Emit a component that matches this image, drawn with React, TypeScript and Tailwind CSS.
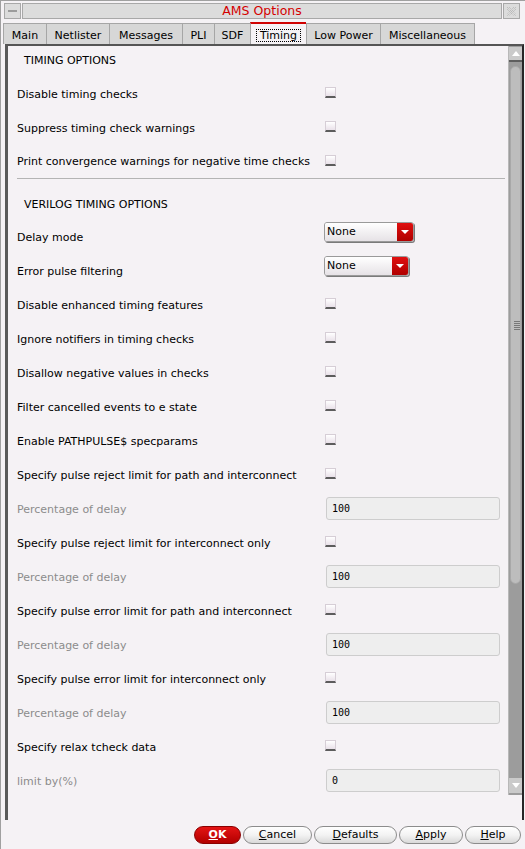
import type { ReactNode } from 'react'

type Row =
  | { kind: 'check'; label: string }
  | { kind: 'select'; label: string; width: number }
  | { kind: 'input'; label: string; value: string }

const ROWS: Row[] = [
  { kind: 'select', label: 'Delay mode', width: 90 },
  { kind: 'select', label: 'Error pulse filtering', width: 85 },
  { kind: 'check', label: 'Disable enhanced timing features' },
  { kind: 'check', label: 'Ignore notifiers in timing checks' },
  { kind: 'check', label: 'Disallow negative values in checks' },
  { kind: 'check', label: 'Filter cancelled events to e state' },
  { kind: 'check', label: 'Enable PATHPULSE$ specparams' },
  { kind: 'check', label: 'Specify pulse reject limit for path and interconnect' },
  { kind: 'input', label: 'Percentage of delay', value: '100' },
  { kind: 'check', label: 'Specify pulse reject limit for interconnect only' },
  { kind: 'input', label: 'Percentage of delay', value: '100' },
  { kind: 'check', label: 'Specify pulse error limit for path and interconnect' },
  { kind: 'input', label: 'Percentage of delay', value: '100' },
  { kind: 'check', label: 'Specify pulse error limit for interconnect only' },
  { kind: 'input', label: 'Percentage of delay', value: '100' },
  { kind: 'check', label: 'Specify relax tcheck data' },
  { kind: 'input', label: 'limit by(%)', value: '0' },
]

const TABS = [
  { name: 'Main', w: 43 },
  { name: 'Netlister', w: 63 },
  { name: 'Messages', w: 73 },
  { name: 'PLI', w: 32 },
  { name: 'SDF', w: 36 },
  { name: 'Timing', w: 56, active: true },
  { name: 'Low Power', w: 74 },
  { name: 'Miscellaneous', w: 95 },
]

function Checkbox() {
  return (
    <span className="block mt-[10px] w-[11px] h-[11px] bg-linear-to-b from-white to-[#e9e1e9] border border-[#d6ced6] border-b-2 border-b-[#5c5c5c]" />
  )
}

function Select({ width }: { width: number }) {
  return (
    <div
      className="mt-[2px] -ml-[1px] h-[20px] flex rounded-[3px] border border-[#9a9a9a] shadow-[1px_1px_0_#7a7a7a] overflow-hidden"
      style={{ width }}
    >
      <div className="flex-1 flex items-center pl-[2px] bg-linear-to-b from-white to-[#e6e2e6]">None</div>
      <div className="w-[16px] flex items-center justify-center bg-linear-to-b from-[#e01010] to-[#b00000]">
        <span className="block w-0 h-0 border-x-[4px] border-x-transparent border-t-[4px] border-t-white" />
      </div>
    </div>
  )
}

function TextField({ value }: { value: string }) {
  return (
    <div className="mt-[5px] ml-[1px] w-[174px] h-[23px] flex items-center pl-[5px] rounded-[3px] border border-[#cdcdcd] bg-[#eeeeee] font-['DejaVu_Sans_Mono',monospace] text-[10px]">
      {value}
    </div>
  )
}

function OptionRow({ row }: { row: Row }) {
  const muted = row.kind === 'input'
  return (
    <div className="h-[34px] shrink-0 flex pl-[9px]">
      <div className={`w-[308px] flex items-center pt-[1px] ${muted ? 'text-[#8c8c8c]' : ''}`}>{row.label}</div>
      {row.kind === 'check' && <Checkbox />}
      {row.kind === 'select' && <Select width={row.width} />}
      {row.kind === 'input' && <TextField value={row.value} />}
    </div>
  )
}

function Btn({ children, primary, w }: { children: ReactNode; primary?: boolean; w: number }) {
  return (
    <button
      className={`h-[18px] rounded-[9px] border flex items-center justify-center text-[11px] ${
        primary
          ? 'bg-linear-to-b from-[#e41414] to-[#b20000] border-[#8a0000] text-white font-bold'
          : 'bg-linear-to-b from-white via-[#f3f3f3] to-[#d9d9d9] border-[#8c8c8c] text-black'
      }`}
      style={{ width: w }}
    >
      {children}
    </button>
  )
}

function Scrollbar() {
  return (
    <div className="w-[14px] flex flex-col pt-[1px] pb-[2px] bg-[#9c9c9c] border-l border-[#b8b8b8]">
      <div className="h-[15px] shrink-0 flex items-center justify-center bg-[#cacaca] border-b-2 border-[#5e5e5e]">
        <span className="block w-0 h-0 border-x-[4px] border-x-transparent border-b-[5px] border-b-white" />
      </div>
      <div className="mt-[4px] h-[518px] shrink-0 mx-[1px] rounded-[6px] bg-[#bdbdbd] border border-[#a8a8a8] flex items-center justify-center">
        <div className="flex flex-col gap-[1px] ml-[2px]">
          <span className="block w-[6px] h-px bg-[#777]" />
          <span className="block w-[6px] h-px bg-[#777]" />
          <span className="block w-[6px] h-px bg-[#777]" />
          <span className="block w-[6px] h-px bg-[#777]" />
          <span className="block w-[6px] h-px bg-[#777]" />
        </div>
      </div>
      <div className="flex-1" />
      <div className="h-[15px] shrink-0 flex items-center justify-center bg-[#cacaca]">
        <span className="block w-0 h-0 border-x-[4px] border-x-transparent border-t-[5px] border-t-white" />
      </div>
    </div>
  )
}

export default function App() {
  return (
    <div className="w-[525px] h-[849px] overflow-hidden bg-[#f5f2f5] text-black text-[11px] leading-[14px] font-['DejaVu_Sans',sans-serif] flex flex-col border-l border-t border-[#a0a0a0]">
      {/* title bar */}
      <div className="h-[21px] shrink-0 flex pl-[3px] pt-[2px] gap-[1px]">
        <div className="w-[17px] h-[16px] bg-[#dcdcdc] border border-[#a8a8a8] flex items-center justify-center">
          <span className="block w-[9px] h-[2px] bg-[#f4f4f4] border border-[#9c9c9c]" />
        </div>
        <div className="w-[480px] h-[16px] bg-[#dcdcdc] border border-[#a8a8a8] flex items-center justify-center text-[12.5px] text-[#d40000]">
          AMS Options
        </div>
        <div className="w-[17px] h-[16px] bg-[#dcdcdc] border border-[#a8a8a8] flex items-center justify-center">
          <svg width="11" height="11" viewBox="0 0 11 11">
            <path d="M1 1L10 10M10 1L1 10M3 1L10 8M1 3L8 10M8 1L1 8M10 3L3 10" stroke="#b4b4b4" strokeWidth="1" strokeDasharray="1 1" fill="none" />
          </svg>
        </div>
      </div>

      {/* tabs */}
      <div className="h-[22px] shrink-0 flex items-end pl-[2px]">
        {TABS.map((t, i) => (
          <div
            key={t.name}
            className={`flex justify-center border-l border-[#a6a6a6] ${i === TABS.length - 1 ? 'border-r' : ''} ${
              t.active
                ? 'h-[22px] bg-[#f5f2f5] border-t-2 border-t-[#d00000] pt-[5px]'
                : 'h-[21px] bg-[#d7d7d7] border-t pt-[5px]'
            }`}
            style={{ width: t.w }}
          >
            {t.active ? (
              <span className="inline-block h-[13px] px-[3px] border border-dotted border-black leading-[9px] pt-[1px]">{t.name}</span>
            ) : (
              <span>{t.name}</span>
            )}
          </div>
        ))}
      </div>

      {/* panel */}
      <div className="ml-[4px] w-[519px] h-[776px] shrink-0 flex flex-col border-l-[3px] border-l-[#5a5a5a] border-t-2 border-t-[#555] border-r-2 border-r-[#262626]">
        <div className="h-[749px] flex">
          <div className="flex-1 overflow-hidden flex flex-col">
            <div className="h-[31px] shrink-0 flex items-center pl-[16px] pb-[1px]">TIMING OPTIONS</div>
            <OptionRow row={{ kind: 'check', label: 'Disable timing checks' }} />
            <OptionRow row={{ kind: 'check', label: 'Suppress timing check warnings' }} />
            <div className="h-[33px] shrink-0 flex pl-[9px]">
              <div className="w-[308px] flex items-center pt-[1px]">Print convergence warnings for negative time checks</div>
              <Checkbox />
            </div>
            <div className="h-px shrink-0 ml-[9px] w-[488px] bg-[#b4b4b4]" />
            <div className="h-[41px] shrink-0 flex items-center pl-[16px] pt-[10px]">VERILOG TIMING OPTIONS</div>
            {ROWS.map((r, i) => (
              <OptionRow key={i} row={r} />
            ))}
          </div>
          <Scrollbar />
        </div>
      </div>

      {/* buttons */}
      <div className="flex justify-end gap-[2px] pr-[4px] pt-[6px]">
        <Btn primary w={47}>
          <span className="underline">O</span>K
        </Btn>
        <Btn w={69}>
          <span className="underline">C</span>ancel
        </Btn>
        <Btn w={83}>
          <span className="underline">D</span>efaults
        </Btn>
        <Btn w={64}>
          <span className="underline">A</span>pply
        </Btn>
        <Btn w={56}>
          <span className="underline">H</span>elp
        </Btn>
      </div>
    </div>
  )
}
